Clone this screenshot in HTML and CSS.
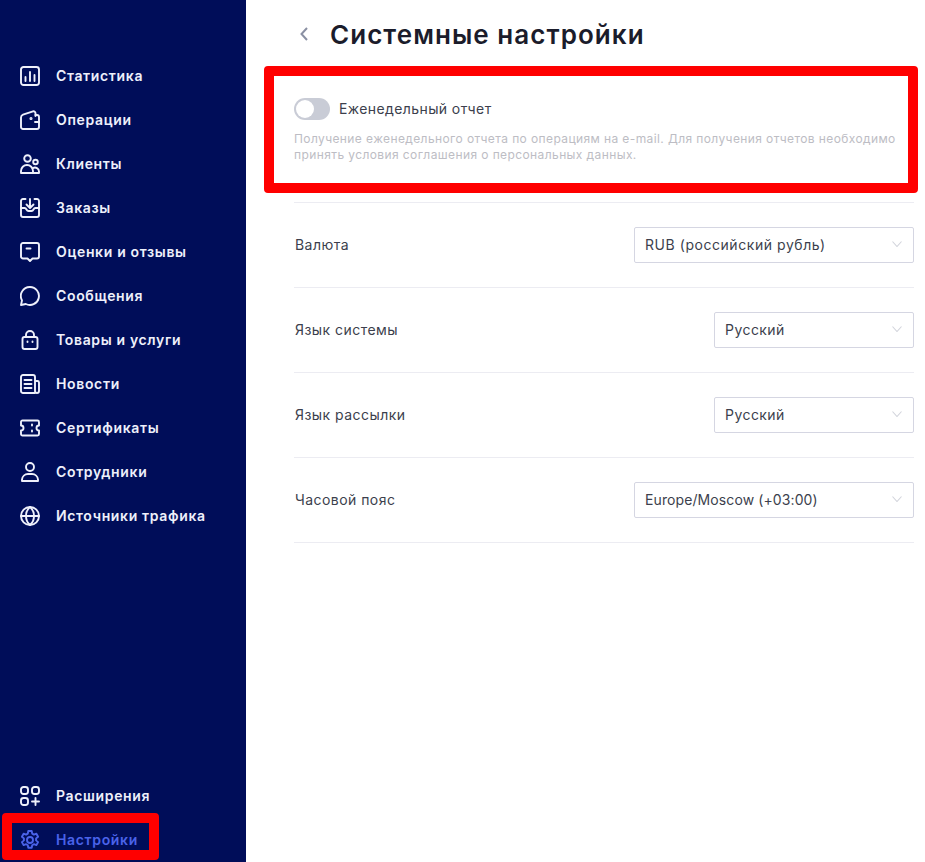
FILE: index.html
```html
<!DOCTYPE html>
<html lang="ru">

<head>
  <meta charset="UTF-8">
  <title>Системные настройки</title>
  <link rel="stylesheet" href="styles.css">
</head>

<body>
  <div class="layout">
    <nav class="sidebar">
      <ul class="menu">
        <li class="menu-item">
          <svg viewBox="0 0 20 20"><rect x="1" y="1" width="18" height="18" rx="2.5"/><path d="M5.5 11v4M10 6v9M14.500 9v6"/></svg>
          <span>Статистика</span>
        </li>
        <li class="menu-item">
          <svg viewBox="0 0 20 20"><path d="M1 7.500a3 3 0 0 1 2-2.800L13 1.300a2 2 0 0 1 2.500 1.900V5h1.500a2 2 0 0 1 2 2v10a2 2 0 0 1-2 2H3a2 2 0 0 1-2-2z"/><path d="M15.500 5v1M19 12h-4"/><circle cx="11" cy="8.500" r=".6"/></svg>
          <span>Операции</span>
        </li>
        <li class="menu-item">
          <svg viewBox="0 0 20 20"><circle cx="7.500" cy="4.500" r="3.300"/><circle cx="15.500" cy="8" r="2.300"/><path d="M1 19v-2a6 6 0 0 1 12 0v2zM13 19h6v-1.500a4 4 0 0 0-6-3.400"/></svg>
          <span>Клиенты</span>
        </li>
        <li class="menu-item">
          <svg viewBox="0 0 20 20"><path d="M5.500 1H3a2 2 0 0 0-2 2v14a2 2 0 0 0 2 2h14a2 2 0 0 0 2-2V3a2 2 0 0 0-2-2h-2.500"/><path d="M10 1v8.500M6.500 6.500l3.500 3.500 3.500-3.500M1 10h3.500c1 0 1.500.5 2 1.500s1 1.500 2 1.500h3c1 0 1.500-.5 2-1.500s1-1.500 2-1.500H19"/></svg>
          <span>Заказы</span>
        </li>
        <li class="menu-item">
          <svg viewBox="0 0 20 20"><path d="M3 1h14a2 2 0 0 1 2 2v11.500a2 2 0 0 1-2 2h-4.500L10 19l-2.500-2.500H3a2 2 0 0 1-2-2V3a2 2 0 0 1 2-2z"/><path d="M6.500 6.500h4"/></svg>
          <span>Оценки и отзывы</span>
        </li>
        <li class="menu-item">
          <svg viewBox="0 0 20 20"><path d="M10 1a9 9 0 1 1-4.200 17L1 19l1-4.600A9 9 0 0 1 10 1z"/></svg>
          <span>Сообщения</span>
        </li>
        <li class="menu-item">
          <svg viewBox="0 0 20 20"><path d="M4.500 7a2 2 0 0 0-2 2v8a2 2 0 0 0 2 2h11a2 2 0 0 0 2-2V9a2 2 0 0 0-2-2zM6 7V5a4 4 0 0 1 8 0v2"/><path d="M7.500 11.500v.5M12.500 11.500v.5"/></svg>
          <span>Товары и услуги</span>
        </li>
        <li class="menu-item">
          <svg viewBox="0 0 20 20"><path d="M15 19H3a2 2 0 0 1-2-2V3a2 2 0 0 1 2-2h10a2 2 0 0 1 2 2v14a2 2 0 0 0 2 2 2 2 0 0 0 2-2V8.500A1.500 1.500 0 0 0 17.500 7H15"/><path d="M4.500 6h7M4.500 10h7M4.500 14h7"/></svg>
          <span>Новости</span>
        </li>
        <li class="menu-item">
          <svg viewBox="0 0 20 20"><path d="M2.500 2.500h15c.8 0 1.500.7 1.500 1.500v3.500a2.500 2.500 0 0 0 0 5V16c0 .8-.7 1.500-1.500 1.500h-15C1.700 17.500 1 16.800 1 16v-3.500a2.500 2.500 0 0 0 0-5V4c0-.8.7-1.500 1.500-1.500z"/><path d="M12 6.500v1M12 12.500v1"/></svg>
          <span>Сертификаты</span>
        </li>
        <li class="menu-item">
          <svg viewBox="0 0 20 20"><circle cx="10" cy="5" r="4"/><path d="M2 19v-1.500a6 6 0 0 1 6-5.500h4a6 6 0 0 1 6 5.500V19z"/></svg>
          <span>Сотрудники</span>
        </li>
        <li class="menu-item">
          <svg viewBox="0 0 20 20"><circle cx="10" cy="10" r="9"/><path d="M1 10h18M10 1c3 2.500 4 5.500 4 9s-1 6.500-4 9c-3-2.500-4-5.500-4-9s1-6.500 4-9z"/></svg>
          <span>Источники трафика</span>
        </li>
      </ul>
      <ul class="menu">
        <li class="menu-item">
          <svg viewBox="0 0 20 20"><rect x="1" y="1" width="7" height="7" rx="2.500"/><rect x="12" y="1" width="7" height="7" rx="2.500"/><rect x="1" y="12" width="7" height="7" rx="2.500"/><path d="M15.500 12v7M12 15.500h7"/></svg>
          <span>Расширения</span>
        </li>
        <li class="menu-item active">
          <svg viewBox="0 0 20 20"><circle cx="10" cy="10" r="3"/><path d="M8.300 1h3.400l.5 2.600 1.700 1 2.500-.9 1.700 3-2 1.700v2l2 1.700-1.700 3-2.500-.9-1.700 1-.5 2.600H8.300l-.5-2.600-1.700-1-2.500.9-1.700-3 2-1.700v-2l-2-1.700 1.700-3 2.500.9 1.700-1z"/></svg>
          <span>Настройки</span>
        </li>
      </ul>
      <div class="mark mark-menu"></div>
    </nav>

    <main class="content">
      <header class="page-head">
        <svg class="back" viewBox="0 0 8 14"><path d="M7 1L1.500 7 7 13"/></svg>
        <h1>Системные настройки</h1>
      </header>

      <section class="report">
        <label class="switch-row">
          <span class="switch"></span>
          <span class="switch-label">Еженедельный отчет</span>
        </label>
        <p class="hint">Получение еженедельного отчета по операциям на e-mail. Для получения отчетов необходимо принять условия соглашения о персональных данных.</p>
      </section>

      <div class="row">
        <span class="row-label">Валюта</span>
        <div class="select wide">RUB (российский рубль)<svg viewBox="0 0 10 6"><path d="M.5.5L5 5.500 9.500.5"/></svg></div>
      </div>
      <div class="row">
        <span class="row-label">Язык системы</span>
        <div class="select">Русский<svg viewBox="0 0 10 6"><path d="M.5.5L5 5.500 9.500.5"/></svg></div>
      </div>
      <div class="row">
        <span class="row-label">Язык рассылки</span>
        <div class="select">Русский<svg viewBox="0 0 10 6"><path d="M.5.5L5 5.500 9.500.5"/></svg></div>
      </div>
      <div class="row">
        <span class="row-label">Часовой пояс</span>
        <div class="select wide latin">Europe/Moscow (+03:00)<svg viewBox="0 0 10 6"><path d="M.5.5L5 5.500 9.500.5"/></svg></div>
      </div>

      <div class="mark mark-report"></div>
    </main>
  </div>
</body>

</html>
```

FILE: styles.css
```css
* {
  box-sizing: border-box;
}

html,
body {
  height: 100%;
}

body {
  margin: 0;
  background-color: #fff;
  color: #3c3f4d;
  font-family: "Inter", "Noto Sans", sans-serif;
  font-size: 14px;
  letter-spacing: .45px;
  overflow: hidden;
}

.layout {
  display: flex;
  height: 862px;
}

/* Sidebar */
.sidebar {
  position: relative;
  flex: 0 0 246px;
  display: flex;
  flex-direction: column;
  justify-content: space-between;
  padding: 54px 0 0;
  background-color: #000d59;
}

.menu {
  list-style: none;
  margin: 0;
  padding: 0;
}

.menu-item {
  display: flex;
  align-items: center;
  gap: 16px;
  height: 44px;
  padding-left: 20px;
  color: #eef0fb;
  font-weight: 600;
  font-size: 14px;
  letter-spacing: .65px;
}

.menu-item span {
  padding-bottom: 2px;
}

.menu-item svg {
  flex: none;
  width: 20px;
  height: 20px;
  margin-top: -1px;
  fill: none;
  stroke: currentColor;
  stroke-width: 1.9;
  stroke-linecap: round;
  stroke-linejoin: round;
}

.menu-item.active {
  color: #4a63ea;
}

/* Main part */
.content {
  position: relative;
  flex: 1;
  padding: 0 11px 0 48px;
}

.page-head {
  display: flex;
  align-items: center;
  height: 68px;
  gap: 22px;
}

.back {
  width: 8px;
  height: 14px;
  margin-left: 6px;
  fill: none;
  stroke: #8a90a3;
  stroke-width: 2;
}

h1 {
  margin: 0;
  color: #1b1c2b;
  font-size: 26px;
  font-weight: 600;
  letter-spacing: 1.05px;
}

.report {
  height: 135px;
  padding-top: 30px;
  border-bottom: 1px solid #ececf2;
}

.switch-row {
  display: flex;
  align-items: center;
  gap: 8px;
  height: 22px;
  color: #3c3f4d;
}

.switch-label,
.row-label {
  margin-left: 1px;
  padding-bottom: 2px;
}

.switch-label {
  letter-spacing: .4px;
}

.switch {
  position: relative;
  width: 36px;
  height: 22px;
  border-radius: 11px;
  background-color: #c9ccd6;
}

.switch::after {
  content: "";
  position: absolute;
  top: 2px;
  left: 2px;
  width: 18px;
  height: 18px;
  border-radius: 50%;
  background-color: #fff;
}

.hint {
  margin: 11px 0 0;
  color: #bdbdc4;
  font-size: 12px;
  line-height: 16px;
  letter-spacing: .4px;
}

.row {
  display: flex;
  align-items: center;
  justify-content: space-between;
  height: 85px;
  border-bottom: 1px solid #ececf2;
}

.select {
  display: flex;
  align-items: center;
  justify-content: space-between;
  width: 200px;
  height: 36px;
  padding: 0 11px 2px 10px;
  border: 1px solid #d5d6e2;
  border-radius: 2px;
  color: #3c3f4d;
}

.select.wide {
  width: 280px;
  letter-spacing: .55px;
}

.select.latin {
  letter-spacing: .1px;
}

.select svg {
  width: 10px;
  height: 6px;
  fill: none;
  stroke: #d2d4dc;
  stroke-width: 1.1;
}

/* Red annotation frames over the page */
.mark {
  position: absolute;
  border: 10px solid #f00;
  border-radius: 4px;
  pointer-events: none;
}

.mark-menu {
  left: 2px;
  top: 813px;
  width: 157px;
  height: 47px;
}

.mark-report {
  left: 18px;
  top: 66px;
  width: 654px;
  height: 127px;
}
```
